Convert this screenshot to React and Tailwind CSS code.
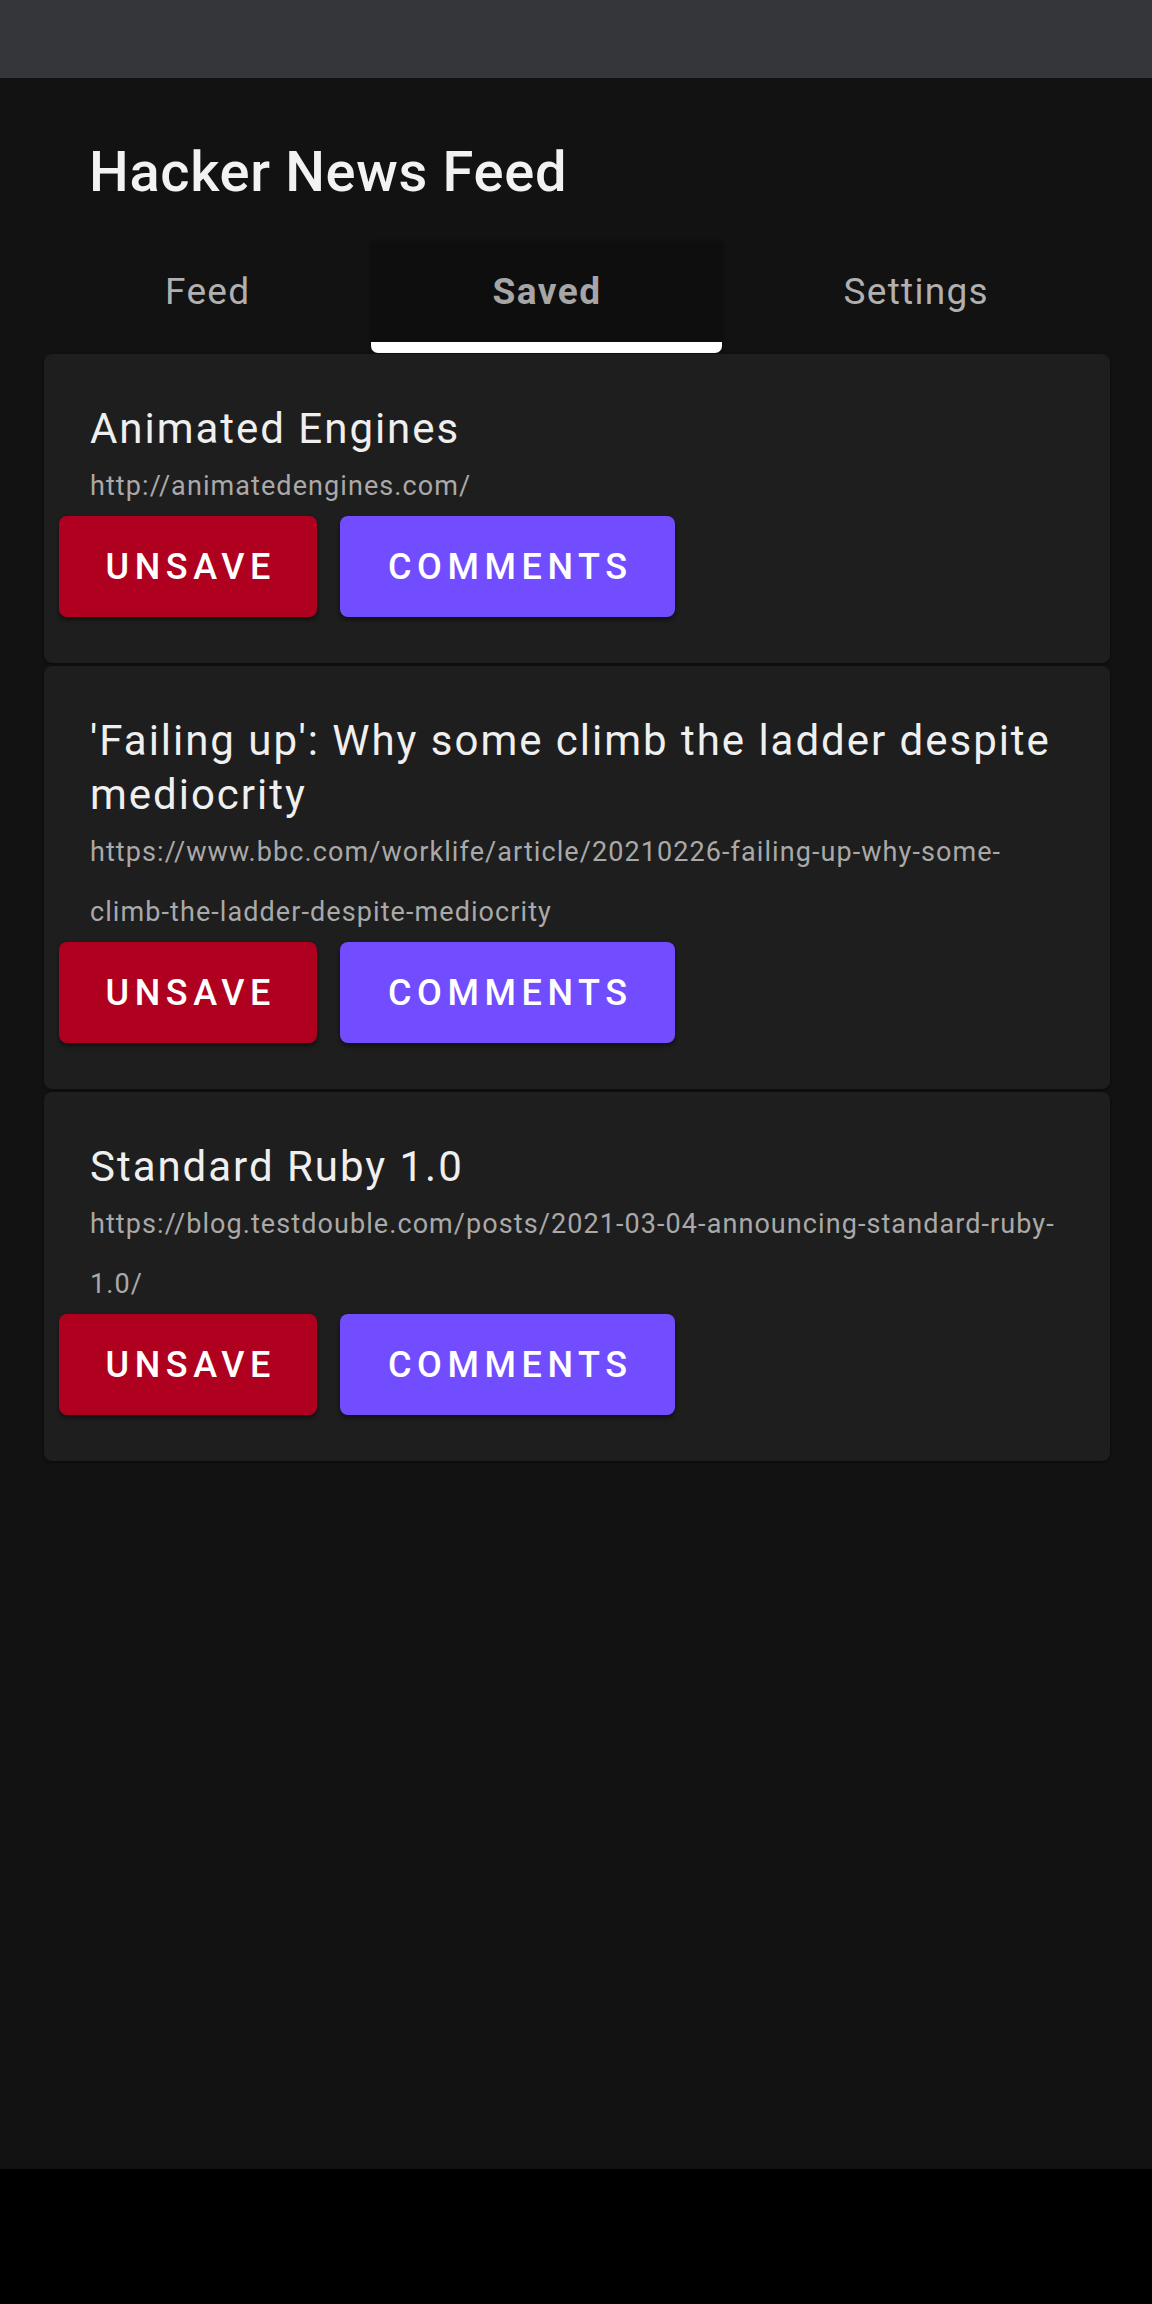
import React from 'react'

const stories = [
  { title: 'Animated Engines', url: ['http://animatedengines.com/'] },
  {
    title: "'Failing up': Why some climb the ladder despite mediocrity",
    url: ['https://www.bbc.com/worklife/article/20210226-failing-up-why-some-', 'climb-the-ladder-despite-mediocrity'],
  },
  {
    title: 'Standard Ruby 1.0',
    url: ['https://blog.testdouble.com/posts/2021-03-04-announcing-standard-ruby-', '1.0/'],
  },
]

const tabs = ['Feed', 'Saved', 'Settings']

function Tab({ label, active }) {
  if (active) {
    return (
      <div className="flex-auto flex flex-col bg-[#0e0e0e] rounded-t-[4px] shadow-[0_0_4px_rgba(0,0,0,0.4)]">
        <div className="flex-1 flex items-center justify-center text-[37px] font-bold tracking-[0.04em] text-[#a6a6a6]">{label}</div>
        <div className="h-[11px] bg-white rounded-b-[7px]" />
      </div>
    )
  }
  return (
    <div className="flex-auto flex flex-col">
      <div className="flex-1 flex items-center justify-center text-[37px] tracking-[0.035em] text-[#b0b0b0]">{label}</div>
      <div className="h-[11px]" />
    </div>
  )
}

function StoryCard({ story }) {
  return (
    <div className="bg-[#1e1e1e] rounded-[8px] pt-[48px] pb-[46px] shadow-[0_1px_3px_rgba(0,0,0,0.5)]">
      <div className="px-[46px]">
        <div className="text-[42px] leading-[54px] tracking-[0.047em] text-[#efefef]">{story.title}</div>
        <div className="text-[27px] leading-[60px] text-[#a9a9a9] tracking-[0.04em] break-words">
          {story.url.map((part, i) => (
            <React.Fragment key={i}>
              {i > 0 && <wbr />}
              {part}
            </React.Fragment>
          ))}
        </div>
      </div>
      <div className="flex gap-[23px] ml-[15px]">
        <button className="w-[258px] h-[101px] rounded-[8px] bg-[#b00020] text-white text-[36px] font-medium tracking-[0.155em] pl-[0.155em] shadow-[0_3px_4px_rgba(0,0,0,0.45)]">
          UNSAVE
        </button>
        <button className="w-[335px] h-[101px] rounded-[8px] bg-[#724cff] text-white text-[36px] font-medium tracking-[0.155em] pl-[0.155em] shadow-[0_3px_4px_rgba(0,0,0,0.45)]">
          COMMENTS
        </button>
      </div>
    </div>
  )
}

export default function App() {
  return (
    <div className="w-[1152px] h-[2304px] flex flex-col font-['Roboto',sans-serif]">
      <div className="h-[78px] bg-[#35363a] flex-shrink-0" />

      <div className="flex-1 bg-[#121212] flex flex-col">
        <h1 className="mt-[62px] pl-[89px] text-[56px] leading-[64px] font-medium tracking-[0.012em] text-[#f2f2f2]">Hacker News Feed</h1>

        <div className="flex h-[111px] mt-[38px] ml-[44px] mr-[42px]">
          {tabs.map(t => <Tab key={t} label={t} active={t === 'Saved'} />)}
        </div>

        <div className="flex flex-col gap-[3px] ml-[44px] mr-[42px] mt-[1px]">
          {stories.map(s => <StoryCard key={s.title} story={s} />)}
        </div>
      </div>

      <div className="h-[135px] bg-black flex-shrink-0" />
    </div>
  )
}
